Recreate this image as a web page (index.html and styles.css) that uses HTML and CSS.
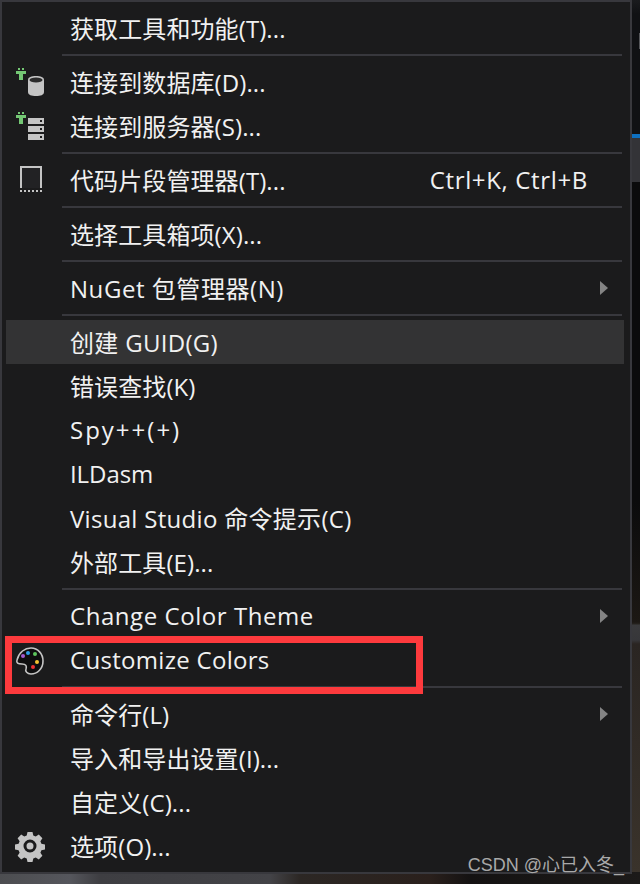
FILE: index.html
```html
<!DOCTYPE html>
<html>
    <head>
        <title>Tools menu</title>
        <meta charset="utf-8" />
        <link rel="stylesheet" href="styles.css">
    </head>
    <body>
        <div class="screen">
            <div class="menu">
                <div class="item"><span class="icon"></span><span class="label">获取工具和功能(T)...</span></div>
                <div class="sep"></div>
                <div class="item">
                    <span class="icon">
                        <svg width="40" height="44" viewBox="6 0 40 44">
                            <path d="M18 8h2v2h-2zM22 8h2v2h-2zM16 11h10v3h-3v6h-4v-6h-3z" fill="#74c774"/>
                            <path d="M28 20c0-3 3.500-4 8-4s8 1 8 4v12c0 3-3.500 4-8 4s-8-1-8-4z" fill="#c4c4c4"/>
                            <ellipse cx="36" cy="20" rx="6.500" ry="2.500" fill="#2b2b2b"/>
                        </svg>
                    </span>
                    <span class="label">连接到数据库(D)...</span>
                </div>
                <div class="item">
                    <span class="icon">
                        <svg width="40" height="44" viewBox="6 0 40 44">
                            <path d="M18 8h2v2h-2zM22 8h2v2h-2zM16 11h10v3h-3v6h-4v-6h-3z" fill="#74c774"/>
                            <path d="M28 14h16v6H28zM28 22h16v6H28zM28 30h16v6H28z" fill="#c4c4c4"/>
                            <path d="M40 16h2v2h-2zM40 24h2v2h-2zM40 32h2v2h-2z" fill="#1b1b1c"/>
                        </svg>
                    </span>
                    <span class="label">连接到服务器(S)...</span>
                </div>
                <div class="sep"></div>
                <div class="item">
                    <span class="icon">
                        <svg width="40" height="44" viewBox="6 0 40 44">
                            <path d="M20 8h22v22H20z" fill="#222224"/>
                            <path d="M20 30V8h22v22h-2V10H22v20z" fill="#c4c4c4"/>
                            <path d="M20 32h2v2h-2zM24 32h2v2h-2zM28 32h2v2h-2zM32 32h2v2h-2zM36 32h2v2h-2zM40 32h2v2h-2z" fill="#c4c4c4"/>
                        </svg>
                    </span>
                    <span class="label">代码片段管理器(T)...</span>
                    <span class="shortcut">Ctrl+K, Ctrl+B</span>
                </div>
                <div class="sep"></div>
                <div class="item"><span class="icon"></span><span class="label">选择工具箱项(X)...</span></div>
                <div class="sep"></div>
                <div class="item"><span class="icon"></span><span class="label nuget">NuGet 包管理器(N)</span><span class="arrow"></span></div>
                <div class="sep"></div>
                <div class="item hover"><span class="icon"></span><span class="label latin">创建 GUID(G)</span></div>
                <div class="item"><span class="icon"></span><span class="label">错误查找(K)</span></div>
                <div class="item"><span class="icon"></span><span class="label spy">Spy++(+)</span></div>
                <div class="item"><span class="icon"></span><span class="label tight">ILDasm</span></div>
                <div class="item"><span class="icon"></span><span class="label latin">Visual Studio 命令提示(C)</span></div>
                <div class="item"><span class="icon"></span><span class="label">外部工具(E)...</span></div>
                <div class="sep"></div>
                <div class="item"><span class="icon"></span><span class="label nuget">Change Color Theme</span><span class="arrow"></span></div>
                <div class="item">
                    <span class="icon">
                        <svg width="40" height="44" viewBox="6 0 40 44">
                            <path d="M17 22C19 14 25 10 31 10C38 10 43 16 43 23C43 31 37 36 31 36C27 36 25 33 26 31C27 28 26 26 22 26C18 26 16 25 17 22Z" fill="#0e0e0f" stroke="#c4c4c4" stroke-width="1.600"/>
                            <circle cx="23" cy="18" r="2" fill="#a45ad0"/>
                            <circle cx="28" cy="15" r="2" fill="#2a9fe8"/>
                            <circle cx="35" cy="16" r="2" fill="#5cc45c"/>
                            <circle cx="37" cy="24" r="2" fill="#f2c230"/>
                            <circle cx="33" cy="29" r="2" fill="#ee3333"/>
                        </svg>
                    </span>
                    <span class="label latin">Customize Colors</span>
                </div>
                <div class="sep"></div>
                <div class="item"><span class="icon"></span><span class="label">命令行(L)</span><span class="arrow"></span></div>
                <div class="item"><span class="icon"></span><span class="label">导入和导出设置(I)...</span></div>
                <div class="item"><span class="icon"></span><span class="label">自定义(C)...</span></div>
                <div class="item">
                    <span class="icon">
                        <svg width="40" height="44" viewBox="6 0 40 44">
                            <path transform="translate(0 -2)" d="M27.500 10h5l.8 3.600 2.400 1 3.100-2 3.600 3.600-2 3.100 1 2.400 3.600.8v5l-3.600.8-1 2.400 2 3.100-3.600 3.600-3.100-2-2.400 1-.8 3.600h-5l-.8-3.600-2.400-1-3.100 2-3.600-3.600 2-3.100-1-2.400-3.600-.8v-5l3.600-.8 1-2.400-2-3.100 3.600-3.600 3.100 2 2.400-1z" fill="#c4c4c4"/>
                            <circle cx="30" cy="22" r="5" fill="#c4c4c4" stroke="#1b1b1c" stroke-width="3"/>
                        </svg>
                    </span>
                    <span class="label">选项(O)...</span>
                </div>
                <div class="mark">CSDN @心已入冬_</div>
                <div class="callout"></div>
            </div>
            <div class="side">
                <div class="side-top"><span class="side-box"></span></div>
                <div class="side-blue"></div>
                <div class="side-grey"></div>
                <div class="side-rest"></div>
            </div>
        </div>
        <div class="below"></div>
    </body>
</html>
```

FILE: styles.css
```css
html, body {
    margin: 0;
    padding: 0;
    background: #0c0c0d;
}
body {
    width: 640px;
    height: 884px;
    overflow: hidden;
    font-family: "Open Sans", "Noto Sans CJK SC", sans-serif;
}
.screen {
    display: flex;
    height: 872px;
}
.menu {
    position: relative;
    width: 618px;
    height: 866px;
    padding: 4px 6px 0 4px;
    border: 2px solid #38383d;
    background: #1b1b1c;
    flex: none;
}
.item {
    display: flex;
    align-items: center;
    height: 44px;
    color: #f1f1f1;
    font-size: 24px;
}
.hover {
    background: #333334;
}
.icon {
    width: 64px;
    height: 44px;
    flex: none;
}
.icon svg {
    display: block;
}
.label {
    flex: 1;
    padding-bottom: 2px;
    letter-spacing: 0.1px;
    white-space: nowrap;
}
.latin {
    letter-spacing: 0.3px;
}
.nuget {
    letter-spacing: 0.55px;
}
.spy {
    letter-spacing: 2px;
}
.tight {
    letter-spacing: -0.08px;
}
.shortcut {
    margin-right: 36px;
    padding-bottom: 2px;
    letter-spacing: 0.65px;
}
.arrow {
    width: 0;
    height: 0;
    margin-right: 16px;
    border-left: 8px solid #848484;
    border-top: 7px solid transparent;
    border-bottom: 7px solid transparent;
}
.sep {
    height: 2px;
    margin: 4px 2px 4px 56px;
    background: #38383d;
}
.mark {
    position: absolute;
    right: 6px;
    bottom: -4px;
    color: #a9a9a9;
    font-family: "Liberation Sans", "Noto Sans CJK SC", sans-serif;
    font-size: 18px;
}
.callout {
    position: absolute;
    left: 3px;
    top: 634px;
    width: 404px;
    height: 44px;
    border: 7px solid #fd3a3d;
}
.side {
    flex: 1;
    display: flex;
    flex-direction: column;
}
.side-top {
    height: 134px;
    padding-top: 33px;
    box-sizing: border-box;
    background: linear-gradient(#1a1b1e 0, #101114 14px, #101114 100%);
}
.side-box {
    display: block;
    width: 6px;
    height: 14px;
    margin-left: 7px;
    border: 1px solid #55565a;
}
.side-blue {
    height: 4px;
    background: #0e70c0;
}
.side-grey {
    height: 44px;
    background: #333337;
}
.side-rest {
    flex: 1;
    background: linear-gradient(#0b0b0c 0, #0b0b0c 320px, #1c1814 440px, #26231f 442px, #3a3a3c 443px, #37373a 458px, #2a2522 462px, #3a332b 690px);
}
.below {
    height: 12px;
    background: linear-gradient(90deg, #4c4d50 0, #55565c 70px, #3e3e42 100px, #434347 270px, #2c2724 300px, #2a201c 430px, #141212 470px, #1c1a19 640px);
}
```
